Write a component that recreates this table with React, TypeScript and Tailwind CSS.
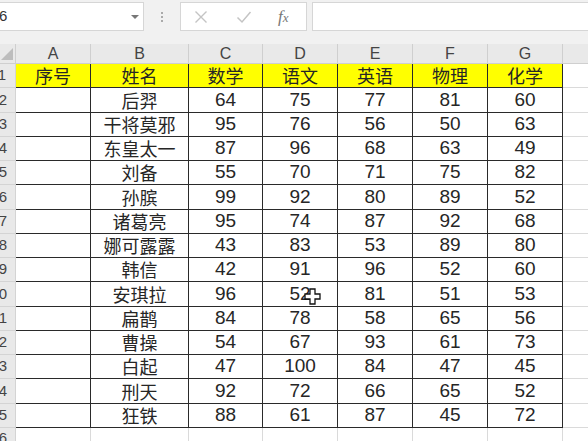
import React from 'react';

const COLS = ['A', 'B', 'C', 'D', 'E', 'F', 'G'];

const HEAD = ['序号', '姓名', '数学', '语文', '英语', '物理', '化学'];

// name, math, chinese, english, physics, chemistry
const ROWS: (string | number)[][] = [
  ['后羿', 64, 75, 77, 81, 60],
  ['干将莫邪', 95, 76, 56, 50, 63],
  ['东皇太一', 87, 96, 68, 63, 49],
  ['刘备', 55, 70, 71, 75, 82],
  ['孙膑', 99, 92, 80, 89, 52],
  ['诸葛亮', 95, 74, 87, 92, 68],
  ['娜可露露', 43, 83, 53, 89, 80],
  ['韩信', 42, 91, 96, 52, 60],
  ['安琪拉', 96, 52, 81, 51, 53],
  ['扁鹊', 84, 78, 58, 65, 56],
  ['曹操', 54, 67, 93, 61, 73],
  ['白起', 47, 100, 84, 47, 45],
  ['刑天', 92, 72, 66, 65, 52],
  ['狂铁', 88, 61, 87, 45, 72],
];

const CJK = "font-['Noto_Sans_CJK_SC',sans-serif]";
const NUM = "font-['Liberation_Sans',Arial,sans-serif]";

function CellCursor() {
  return (
    <svg className="absolute left-[41px] top-[6px]" width="17" height="17" viewBox="0 0 17 17">
      <path
        d="M6 1h5v5h5v5h-5v5h-5v-5h-5v-5h5z"
        fill="#fff"
        stroke="#111"
        strokeWidth="1.3"
        strokeLinejoin="miter"
      />
    </svg>
  );
}

function FormulaBar() {
  return (
    <div className="h-[44px] bg-[#f1f1f1] pt-[2px]">
      <div className="flex h-[29px] items-stretch">
        <div className="relative flex w-[144px] items-center border-y border-r border-[#d6d6d6] bg-white">
          <span className={`${NUM} ml-[-1px] text-[15px] text-[#333]`}>6</span>
          <span className="absolute left-[131px] top-[12px] h-0 w-0 border-x-[4px] border-t-[4px] border-x-transparent border-t-[#777]" />
        </div>
        <div className="flex w-[36px] flex-col items-center justify-center gap-[2px]">
          <span className="h-[2px] w-[2px] bg-[#aaa]" />
          <span className="h-[2px] w-[2px] bg-[#aaa]" />
          <span className="h-[2px] w-[2px] bg-[#aaa]" />
        </div>
        <div className="flex w-[127px] items-center border border-[#d6d6d6] bg-white">
          <svg className="ml-[13px]" width="14" height="14" viewBox="0 0 14 14">
            <path d="M1.5 1.5l11 11M12.5 1.5l-11 11" stroke="#c4c4c4" strokeWidth="1.4" />
          </svg>
          <svg className="ml-[28px]" width="16" height="14" viewBox="0 0 16 14">
            <path d="M1.5 7.5l4.5 4.5 8.5-10" fill="none" stroke="#c4c4c4" strokeWidth="1.5" />
          </svg>
          <span className="ml-[26px] font-['Liberation_Serif',serif] text-[17px] italic text-[#777]">
            f<span className="text-[13px]">x</span>
          </span>
        </div>
        <div className="ml-[5px] flex-1 border-y border-l border-[#d6d6d6] bg-white" />
      </div>
    </div>
  );
}

export default function App() {
  const tableCell = 'flex items-center justify-center border-r border-b border-[#2a2a2a] text-[#262626]';

  return (
    <div className="h-[441px] w-[588px] overflow-hidden bg-white">
      <FormulaBar />
      <div className="grid grid-cols-[16px_75px_98px_74px_75px_75px_75px_75px_1fr] grid-rows-[20px_24px_25px_24px_24px_24px_25px_24px_24px_24px_25px_24px_24px_24px_25px_24px_13px]">
        {/* column header row */}
        <div className="relative border-r border-b border-[#cfcfcf] bg-[#e9e9e9]">
          <span className="absolute bottom-[3px] right-[2px] h-0 w-0 border-b-[12px] border-l-[12px] border-b-[#bdbdbd] border-l-transparent" />
        </div>
        {COLS.map((c) => (
          <div
            key={c}
            className={`${NUM} flex items-end justify-center border-r border-b border-[#cfcfcf] bg-[#e9e9e9] pb-[1px] text-[16px] leading-none text-[#444]`}
          >
            {c}
          </div>
        ))}
        <div className="border-b border-[#cfcfcf] bg-[#e9e9e9]" />

        {/* row 1: headings */}
        <div className={`${NUM} flex items-center justify-end overflow-hidden border-r border-b border-[#d4d4d4] bg-[#e9e9e9] pr-[9px] text-[15px] text-[#444]`}>
          1
        </div>
        {HEAD.map((h) => (
          <div key={h} className={`${tableCell} ${CJK} bg-[#ffff00] text-[18px]`}>
            {h}
          </div>
        ))}
        <div className="border-b border-[#dadada]" />

        {/* rows 2-15 */}
        {ROWS.map((r, i) => (
          <React.Fragment key={i}>
            <div className={`${NUM} flex items-center justify-end overflow-hidden whitespace-nowrap border-r border-b border-[#d4d4d4] bg-[#e9e9e9] pr-[8px] text-[15px] text-[#444]`}>
              {i + 2}
            </div>
            <div className={tableCell} />
            <div className={`${tableCell} ${CJK} text-[18px]`}>{r[0]}</div>
            {r.slice(1).map((v, j) => (
              <div key={j} className={`${tableCell} ${NUM} relative text-[19px]`}>
                {v}
                {i === 8 && j === 1 && <CellCursor />}
              </div>
            ))}
            <div className="border-b border-[#dadada]" />
          </React.Fragment>
        ))}

        {/* row 16 */}
        <div className={`${NUM} flex items-start justify-end overflow-hidden whitespace-nowrap border-r border-[#d4d4d4] bg-[#e9e9e9] pr-[8px] text-[15px] leading-[20px] text-[#444]`}>
          16
        </div>
        {COLS.map((c) => (
          <div key={c} className="border-r border-[#dadada]" />
        ))}
        <div />
      </div>
    </div>
  );
}
